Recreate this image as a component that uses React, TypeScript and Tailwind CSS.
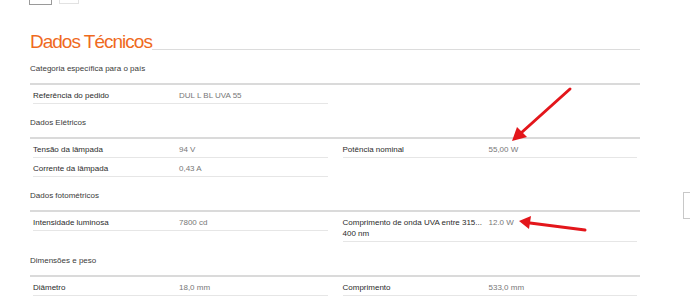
type Spec = { label: string; value: string };

type Section = {
  title: string;
  left: Spec[];
  right: Spec[];
};

const sections: Section[] = [
  {
    title: 'Categoria específica para o país',
    left: [{ label: 'Referência do pedido', value: 'DUL L BL UVA 55' }],
    right: [],
  },
  {
    title: 'Dados Elétricos',
    left: [
      { label: 'Tensão da lâmpada', value: '94 V' },
      { label: 'Corrente da lâmpada', value: '0,43 A' },
    ],
    right: [{ label: 'Potência nominal', value: '55,00 W' }],
  },
  {
    title: 'Dados fotométricos',
    left: [{ label: 'Intensidade luminosa', value: '7800 cd' }],
    right: [{ label: 'Comprimento de onda UVA entre 315... 400 nm', value: '12.0 W' }],
  },
  {
    title: 'Dimensões e peso',
    left: [{ label: 'Diâmetro', value: '18,0 mm' }],
    right: [{ label: 'Comprimento', value: '533,0 mm' }],
  },
];

const SpecRow = ({ spec }: { spec: Spec }) => (
  <div className="flex border-b border-[#e6e6e6] pt-[5px] pb-[2px] text-[8px] leading-[11px]">
    <div className="w-[146px] shrink-0 pr-[4px] text-[#2b2b2b]">{spec.label}</div>
    <div className="text-[#777]">{spec.value}</div>
  </div>
);

const Arrows = () => (
  <svg className="pointer-events-none absolute inset-0" width="690" height="302" viewBox="0 0 690 302">
    <g stroke="#e3161b" strokeWidth="3" strokeLinecap="round" fill="#e3161b">
      <line x1="570" y1="89" x2="521" y2="133" />
      <polygon points="512,141 517,127 527,137" stroke="none" />
      <line x1="585" y1="230" x2="530" y2="223" />
      <polygon points="519,221 531,216 529,229" stroke="none" />
    </g>
  </svg>
);

export default function App() {
  return (
    <div
      className="relative h-[302px] w-[690px] overflow-hidden bg-white"
      style={{ fontFamily: '"Liberation Sans", Arial, Helvetica, sans-serif' }}
    >
      {/* tabs above, mostly scrolled out of view */}
      <div className="flex h-[5px] items-end gap-[7px] overflow-hidden pl-[29px]">
        <div className="h-[20px] w-[23px] border border-[#9a9a9a]" />
        <div className="mb-[1px] h-[20px] w-[20px] border border-[#e2e2e2]" />
      </div>

      <div className="w-[640px] pl-[30px]">
        <div className="mt-[27px] flex items-end">
          <h2 className="text-[19px] leading-none tracking-[-1px] text-[#ef6a1e]">Dados Técnicos</h2>
          <div className="mb-[1px] flex-1 border-b border-[#dcdcdc]" />
        </div>

        {sections.map((s, i) => (
          <div key={s.title}>
            <div
              className={`${i === 0 ? 'pt-[12px]' : 'pt-[13px]'} pb-[8px] text-[8px] leading-[12px] text-[#3a3a3a]`}
            >
              {s.title}
            </div>
            <div className="border-t-2 border-[#dadada]" />
            <div className="grid grid-cols-2 gap-x-[15px] px-[3px]">
              <div>
                {s.left.map((r) => (
                  <SpecRow key={r.label} spec={r} />
                ))}
              </div>
              <div>
                {s.right.map((r) => (
                  <SpecRow key={r.label} spec={r} />
                ))}
              </div>
            </div>
          </div>
        ))}
      </div>

      {/* floating side widget, cut by the window edge */}
      <div className="absolute left-[683px] top-[192px] h-[27px] w-[20px] border border-[#c8c8c8] bg-white" />

      <Arrows />
    </div>
  );
}
